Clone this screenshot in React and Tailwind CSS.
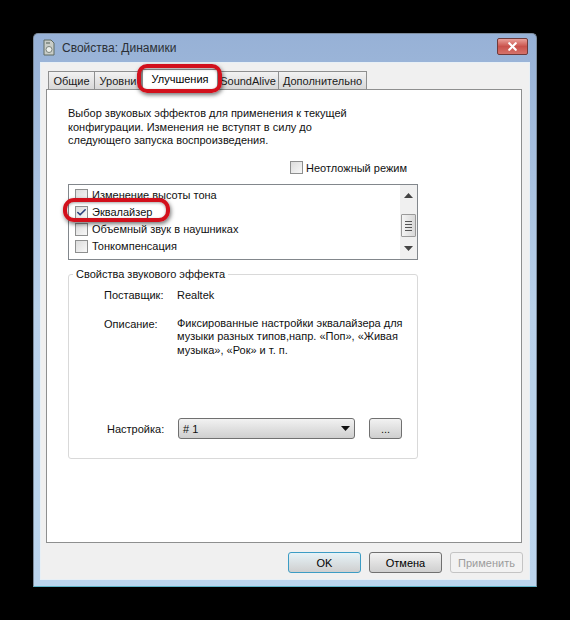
import { Check, X } from 'lucide-react';

const font = 'font-["Liberation_Sans",sans-serif]';

function Tab({ label, className = '' }) {
  return (
    <div className={`h-[18px] flex items-center justify-center border border-b-0 border-[#8e8f8f] bg-gradient-to-b from-[#f2f2f2] to-[#d8d8d8] text-[#1a1a1a] ${className}`}>
      {label}
    </div>
  );
}

function Box({ checked = false }) {
  return (
    <span className="w-[13px] h-[13px] shrink-0 flex items-center justify-center border border-[#8e8f8f] bg-gradient-to-br from-[#dcdcdc] to-[#f8f8f8]">
      {checked && <Check size={11} strokeWidth={3.5} className="text-[#2b3f7c]" />}
    </span>
  );
}

function ListRow({ label, checked }) {
  return (
    <div className="h-[17px] flex items-center gap-[4px] pl-[6px]">
      <Box checked={checked} />
      <span>{label}</span>
    </div>
  );
}

function DlgButton({ label, className = '' }) {
  return (
    <button className={`w-[73px] h-[21px] rounded-[3px] border flex items-center justify-center ${className}`}>
      {label}
    </button>
  );
}

export default function App() {
  return (
    <div className={`w-[570px] h-[620px] bg-black pt-[33px] pl-[33px] text-[11px] leading-[14px] text-[#111] ${font}`}>
      <div className="w-[504px] h-[554px] rounded-t-[5px] border border-[#7d8c9d] border-b-[#5fb4c8] bg-gradient-to-b from-[#97b1d6] via-[#b9d1ea] to-[#bcd5ee] px-[6px] pb-[6px] flex flex-col">
        {/* title bar */}
        <div className="h-[28px] shrink-0 flex items-center relative">
          <svg width="16" height="18" viewBox="0 0 16 18" className="ml-[1px] mr-[5px]">
            <path d="M3 1h7l3 3v12H3z" fill="#c9cdc8" stroke="#5f6a62" />
            <circle cx="8" cy="10.5" r="3" fill="#eef0ec" stroke="#7a837c" />
            <rect x="5" y="3" width="4" height="2" fill="#8c958e" />
          </svg>
          <span className="text-[12px] text-[#2b3036]">Свойства: Динамики</span>
          <div className="ml-auto mr-[2px] mb-[4px] w-[31px] h-[17px] rounded-[2px] border border-[#6e3a3a] bg-gradient-to-b from-[#e9a09a] via-[#c9524c] to-[#d5726a] flex items-center justify-center">
            <X size={13} strokeWidth={4} className="text-white" />
          </div>
        </div>

        {/* client area */}
        <div className="flex-1 bg-[#f0f0f0] border border-[#e8f0f6] px-[5px] pt-[8px] flex flex-col relative">
          <div className="flex pl-[2px] h-[18px] shrink-0">
            <Tab label="Общие" className="w-[47px]" />
            <Tab label="Уровни" className="w-[47px] border-l-0" />
            <div className="w-[76px] h-[20px] -mt-[2px] pb-[2px] flex items-center justify-center bg-white border border-b-0 border-[#8e8f8f] text-black relative z-10">Улучшения</div>
            <Tab label="SoundAlive" className="w-[61px] border-l-0" />
            <Tab label="Дополнительно" className="w-[88px] border-l-0" />
          </div>

          {/* tab page */}
          <div className="w-[476px] h-[454px] shrink-0 bg-white border border-[#8e8f8f] pl-[21px] pt-[17px]">
            <p className="leading-[13.5px] w-[300px]">
              Выбор звуковых эффектов для применения к текущей конфигурации. Изменения не вступят в силу до следующего запуска воспроизведения.
            </p>
            <div className="flex items-center gap-[3px] mt-[13px] ml-[222px] h-[14px]">
              <Box />
              <span>Неотложный режим</span>
            </div>

            {/* effects list */}
            <div className="relative w-[350px] h-[76px] mt-[9px] border border-[#82878c] flex">
              <div className="flex-1 pt-[2px] overflow-hidden">
                <ListRow label="Изменение высоты тона" />
                <ListRow label="Эквалайзер" checked />
                <ListRow label="Объемный звук в наушниках" />
                <ListRow label="Тонкомпенсация" />
              </div>
              <div className="w-[17px] bg-[#f0f0f0] flex flex-col items-center justify-between py-[8px]">
                <svg width="9" height="5" viewBox="0 0 9 5"><path d="M4.5 0L9 5H0z" fill="#444" /></svg>
                <div className="w-[15px] h-[23px] mt-[8px] border border-[#9a9a9a] rounded-[1px] bg-gradient-to-r from-[#f4f4f4] to-[#d8d8d8] flex flex-col items-center justify-center gap-[2px]">
                  <span className="w-[7px] h-px bg-[#555]" />
                  <span className="w-[7px] h-px bg-[#555]" />
                  <span className="w-[7px] h-px bg-[#555]" />
                  <span className="w-[7px] h-px bg-[#555]" />
                </div>
                <svg width="9" height="5" viewBox="0 0 9 5"><path d="M0 0h9L4.5 5z" fill="#444" /></svg>
              </div>
            </div>

            {/* effect properties */}
            <div className="relative w-[350px] h-[185px] mt-[14px] border border-[#d9d9d9] rounded-[3px]">
              <span className="absolute -top-[8px] left-[4px] bg-white px-[3px]">Свойства звукового эффекта</span>
              <div className="flex mt-[13px] h-[14px]">
                <span className="w-[108px] pl-[35px]">Поставщик:</span>
                <span>Realtek</span>
              </div>
              <div className="flex mt-[15px]">
                <span className="w-[108px] pl-[35px]">Описание:</span>
                <p className="w-[235px] leading-[13.5px]">
                  Фиксированные настройки эквалайзера для музыки разных типов,напр. «Поп», «Живая музыка», «Рок» и т. п.
                </p>
              </div>
              <div className="flex items-center mt-[61px] h-[21px]">
                <span className="w-[109px] pl-[38px]">Настройка:</span>
                <div className="w-[177px] h-[21px] rounded-[3px] border border-[#707070] bg-gradient-to-b from-[#f2f2f2] to-[#cfcfcf] flex items-center pl-[4px] pr-[4px]">
                  <span># 1</span>
                  <svg width="9" height="5" viewBox="0 0 9 5" className="ml-auto"><path d="M0 0h9L4.5 5z" fill="#111" /></svg>
                </div>
                <button className="w-[33px] h-[21px] ml-[14px] rounded-[3px] border border-[#707070] bg-gradient-to-b from-[#f2f2f2] to-[#cfcfcf]">...</button>
              </div>
            </div>
          </div>

          {/* dialog buttons */}
          <div className="flex justify-end gap-[8px] mt-[9px] pr-[1px]">
            <DlgButton label="OK" className="border-[#3c9cc4] bg-gradient-to-b from-[#e6f3f8] to-[#cfcfcf] text-black" />
            <DlgButton label="Отмена" className="border-[#707070] bg-gradient-to-b from-[#f2f2f2] to-[#cfcfcf] text-black" />
            <DlgButton label="Применить" className="border-[#c4c4c4] bg-[#f2f2f2] text-[#9c9c9c]" />
          </div>

          {/* red callouts */}
          <div className="absolute left-[96px] top-[1px] w-[85px] h-[29px] rounded-[10px] border-[4px] border-[#d2101c] shadow-[1px_2px_4px_rgba(0,0,0,0.55),inset_0_1px_3px_rgba(0,0,0,0.35)] z-20" />
          <div className="absolute left-[22px] top-[135px] w-[107px] h-[24px] rounded-[11px] border-[4px] border-[#d2101c] shadow-[1px_2px_4px_rgba(0,0,0,0.55),inset_0_1px_3px_rgba(0,0,0,0.35)] z-20" />
        </div>
      </div>
    </div>
  );
}
